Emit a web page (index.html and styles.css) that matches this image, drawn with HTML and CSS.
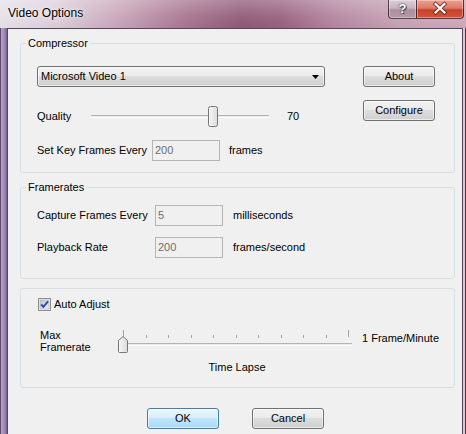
FILE: index.html
```html
<!DOCTYPE html>
<html>
<head>
<meta charset="utf-8">
<link rel="stylesheet" href="styles.css">
</head>
<body>
<div class="window">
  <div class="titlebar">
    <span class="title">Video Options</span>
    <div class="caption">
      <div class="cap-btn help">?</div>
      <div class="cap-btn close">
        <svg width="48" height="19" viewBox="0 0 48 19">
          <path d="M19.5 5 L28.5 13.5 M28.5 5 L19.5 13.5" stroke="#5a1a10" stroke-width="4" stroke-linecap="square" fill="none" opacity="0.75"/>
          <path d="M19.5 5 L28.5 13.5 M28.5 5 L19.5 13.5" stroke="#ffffff" stroke-width="2.2" stroke-linecap="square" fill="none"/>
        </svg>
      </div>
    </div>
  </div>
  <div class="frame">
    <div class="frame-left"></div>
    <div class="client">
      <fieldset class="group g1">
        <legend>Compressor</legend>
        <div class="body">
          <div class="row r1">
            <div class="combo"><span>Microsoft Video 1</span>
              <svg class="arrow" width="7" height="4" viewBox="0 0 7 4"><polygon points="0,0 7,0 3.5,4" fill="#000"/></svg>
            </div>
            <div class="btn about">About</div>
          </div>
          <div class="row r2">
            <span class="lbl q">Quality</span>
            <svg class="track1" width="178" height="21" viewBox="0 0 178 21">
              <defs>
                <linearGradient id="th1" x1="0" y1="0" x2="1" y2="0">
                  <stop offset="0" stop-color="#f7f7f7"/>
                  <stop offset="1" stop-color="#dcdcdc"/>
                </linearGradient>
              </defs>
              <rect x="0" y="9" width="178" height="3" fill="#e9e9e9"/>
              <rect x="0" y="9" width="178" height="1" fill="#b4b4b4"/>
              <rect x="0" y="11" width="178" height="1" fill="#ffffff"/>
              <rect x="117.5" y="0.5" width="9" height="20" rx="2" fill="url(#th1)" stroke="#777777"/>
            </svg>
            <span class="val">70</span>
            <div class="btn conf">Configure</div>
          </div>
          <div class="row r3">
            <span class="lbl kf">Set Key Frames Every</span>
            <div class="edit">200</div>
            <span class="unit">frames</span>
          </div>
        </div>
      </fieldset>

      <fieldset class="group g2">
        <legend>Framerates</legend>
        <div class="body">
          <div class="row fr">
            <span class="lbl cf">Capture Frames Every</span>
            <div class="edit">5</div>
            <span class="unit">milliseconds</span>
          </div>
          <div class="row fr fr2">
            <span class="lbl cf">Playback Rate</span>
            <div class="edit">200</div>
            <span class="unit">frames/second</span>
          </div>
        </div>
      </fieldset>

      <div class="group g3">
        <div class="body">
          <div class="check-row">
            <svg class="check" width="13" height="13" viewBox="0 0 13 13">
              <defs>
                <linearGradient id="cb" x1="0" y1="0" x2="1" y2="1">
                  <stop offset="0" stop-color="#b9c4d6"/>
                  <stop offset="1" stop-color="#eef1f6"/>
                </linearGradient>
              </defs>
              <rect x="0.5" y="0.5" width="12" height="12" fill="#f3f3f3" stroke="#8e8f8f"/>
              <rect x="2" y="2" width="9" height="9" fill="url(#cb)" stroke="#a5adbd" stroke-width="0.6"/>
              <path d="M3.2 6.4 L5.4 9 L10 3.3" stroke="#2d44a0" stroke-width="1.9" fill="none" stroke-linejoin="round"/>
            </svg>
            <span class="check-label">Auto Adjust</span>
          </div>
          <div class="rate-row">
            <span class="maxlbl">Max<br>Framerate</span>
            <div class="slider2">
              <svg width="238" height="25" viewBox="0 0 238 25">
                <defs>
                  <linearGradient id="th2" x1="0" y1="0" x2="1" y2="0">
                    <stop offset="0" stop-color="#f7f7f7"/>
                    <stop offset="1" stop-color="#dadada"/>
                  </linearGradient>
                </defs>
                <g fill="#a3a3a3">
                  <rect x="5" y="1" width="1" height="7"/>
                  <rect x="28" y="6" width="1" height="3"/>
                  <rect x="50" y="6" width="1" height="3"/>
                  <rect x="73" y="6" width="1" height="3"/>
                  <rect x="95" y="6" width="1" height="3"/>
                  <rect x="118" y="6" width="1" height="3"/>
                  <rect x="140" y="6" width="1" height="3"/>
                  <rect x="163" y="6" width="1" height="3"/>
                  <rect x="185" y="6" width="1" height="3"/>
                  <rect x="208" y="6" width="1" height="3"/>
                  <rect x="230" y="1" width="1" height="7"/>
                </g>
                <rect x="2" y="14" width="232" height="3" fill="#e9e9e9"/>
                <rect x="2" y="14" width="232" height="1" fill="#b4b4b4"/>
                <rect x="2" y="16" width="232" height="1" fill="#ffffff"/>
                <path d="M0.5 11.5 L5 7.5 L9.5 11.5 V22.5 Q9.5 23.5 8.5 23.5 H1.5 Q0.5 23.5 0.5 22.5 Z" fill="url(#th2)" stroke="#777777"/>
              </svg>
              <div class="caption-text">Time Lapse</div>
            </div>
            <span class="maxval">1 Frame/Minute</span>
          </div>
        </div>
      </div>

      <div class="buttons">
        <div class="btn ok">OK</div>
        <div class="btn">Cancel</div>
      </div>
    </div>
    <div class="frame-right"></div>
  </div>
</div>
</body>
</html>
```

FILE: styles.css
```css
* { box-sizing: border-box; }

html, body {
  margin: 0;
  padding: 0;
}

body {
  width: 466px;
  height: 434px;
  overflow: hidden;
  font-family: "Liberation Sans", Arial, sans-serif;
  font-size: 11px;
  color: #000;
}

.window {
  width: 466px;
  height: 434px;
  display: flex;
  flex-direction: column;
}

.titlebar {
  height: 28px;
  flex: none;
  display: flex;
  justify-content: space-between;
  background:
    linear-gradient(180deg, rgba(255,255,255,0.25) 0%, rgba(255,255,255,0.05) 60%, rgba(0,0,0,0.02) 100%),
    linear-gradient(90deg, #e7e1ea 0%, #dccfdb 12%, #c9a7ba 25%, #a7758e 40%, #8f5a77 52%, #98617f 60%, #b4879f 72%, #c6a2b4 85%, #cdaabb 100%);
}

.title {
  padding-left: 8px;
  font-size: 12px;
  line-height: 27px;
  color: #000;
  text-shadow: 0 0 6px rgba(255,255,255,0.9), 0 0 2px rgba(255,255,255,0.7);
}

.caption {
  display: flex;
  margin-right: 2px;
  align-self: flex-start;
}

.cap-btn {
  height: 19px;
  border: 1px solid rgba(40, 20, 35, 0.75);
  border-top: none;
  box-shadow: inset 0 0 0 1px rgba(255,255,255,0.35);
}

.help {
  width: 28px;
  border-right: none;
  border-bottom-left-radius: 4px;
  background: linear-gradient(180deg, #dccfd6 0%, #c9b3bf 45%, #ad8d9d 55%, #b59aa8 100%);
  color: #fff;
  font-weight: bold;
  font-size: 13px;
  line-height: 18px;
  text-align: center;
  text-shadow: 0 0 1px #333, 0 0 2px #444, 1px 1px 0 #555;
}

.close {
  width: 48px;
  border-bottom-right-radius: 4px;
  background: linear-gradient(180deg, #eaa294 0%, #dc7a66 45%, #c8412a 55%, #d2553c 100%);
}

.close svg { display: block; margin-top: -1px; margin-left: -1px; }

.frame {
  flex: 1;
  display: flex;
}

.frame-left {
  width: 7px;
  flex: none;
  background: linear-gradient(90deg, #5a4866 0, #5a4866 1px, #b8a7d0 1px, #a08bbd 4px, #8a74a8 6px, #6b5a7a 7px);
}

.frame-right {
  width: 3px;
  flex: none;
  background: linear-gradient(90deg, #dcc6d2 0, #dcc6d2 2px, #4e3346 2px);
}

.client {
  width: 456px;
  flex: none;
  background: #f0f0f0;
  border: 1px solid #574659;
  border-bottom: none;
  padding: 7px 0 0 12px;
}

.group {
  margin: 0;
  padding: 0;
  width: 435px;
  border: 1px solid #d5dfe5;
  border-radius: 3px;
  min-inline-size: 0;
}

.group legend {
  margin-left: 5px;
  padding: 0 2px;
  line-height: 14px;
  font-size: 11px;
}

.g1 .body { padding: 16px 0 11px 16px; }

.g2 { margin-top: 7px; }
.g2 .body { padding: 11px 0 20px 16px; }

.g3 { margin-top: 9px; }
.g3 .body { padding: 9px 0 13px 17px; }

.row { display: flex; }

.r1 { height: 21px; }

.combo {
  width: 288px;
  height: 21px;
  border: 1px solid #707070;
  border-radius: 3px;
  padding: 0 5px 0 3px;
  line-height: 19px;
  display: flex;
  justify-content: space-between;
  align-items: center;
  background: linear-gradient(180deg, #f2f2f2 0%, #ebebeb 45%, #dddddd 50%, #cfcfcf 100%);
  box-shadow: inset 0 0 0 1px rgba(255,255,255,0.6);
}

.arrow { display: block; }

.btn {
  width: 72px;
  height: 21px;
  border: 1px solid #707070;
  border-radius: 3px;
  line-height: 19px;
  text-align: center;
  background: linear-gradient(180deg, #f2f2f2 0%, #ebebeb 45%, #dddddd 50%, #cfcfcf 100%);
  box-shadow: inset 0 0 0 1px rgba(255,255,255,0.6);
}

.about { margin-left: 38px; }

.r2 {
  margin-top: 13px;
  height: 27px;
  align-items: flex-start;
}

.lbl { line-height: 13px; }

.q { width: 54px; margin-top: 10px; }

.track1 { display: block; margin-top: 6px; flex: none; }

.val {
  width: 76px;
  margin-left: 18px;
  margin-top: 10px;
  line-height: 13px;
}

.r3 {
  margin-top: 13px;
  height: 21px;
  align-items: center;
}

.kf { width: 115px; }

.edit {
  width: 68px;
  height: 21px;
  border: 1px solid #b5b5b5;
  padding-left: 2px;
  line-height: 19px;
  color: #6d6d6d;
  background: #f0f0f0;
}

.unit { margin-left: 9px; line-height: 13px; }

.fr { height: 21px; align-items: center; }
.fr2 { margin-top: 11px; }
.cf { width: 118px; }
.fr .unit { margin-left: 10px; }

.check-row {
  display: flex;
  align-items: center;
  height: 13px;
}

.check { display: block; flex: none; }

.check-label { margin-left: 3px; line-height: 13px; }

.rate-row {
  display: flex;
  align-items: flex-start;
  margin-top: 18px;
  margin-left: 2px;
}

.maxlbl {
  width: 78px;
  line-height: 12px;
}

.slider2 {
  width: 238px;
  flex: none;
}

.slider2 svg { display: block; }

.caption-text {
  margin-top: 7px;
  line-height: 13px;
  text-align: center;
}

.maxval {
  margin-left: 6px;
  margin-top: 3px;
  line-height: 13px;
}

.buttons {
  display: flex;
  justify-content: center;
  gap: 33px;
  width: 431px;
  margin-top: 20px;
}

.ok {
  border-color: #3c7fb1;
  background: linear-gradient(180deg, #eaf6fd 0%, #d9f0fc 45%, #bee6fd 50%, #a7d9f5 100%);
  box-shadow: inset 0 0 0 1px rgba(255,255,255,0.55);
}
```
